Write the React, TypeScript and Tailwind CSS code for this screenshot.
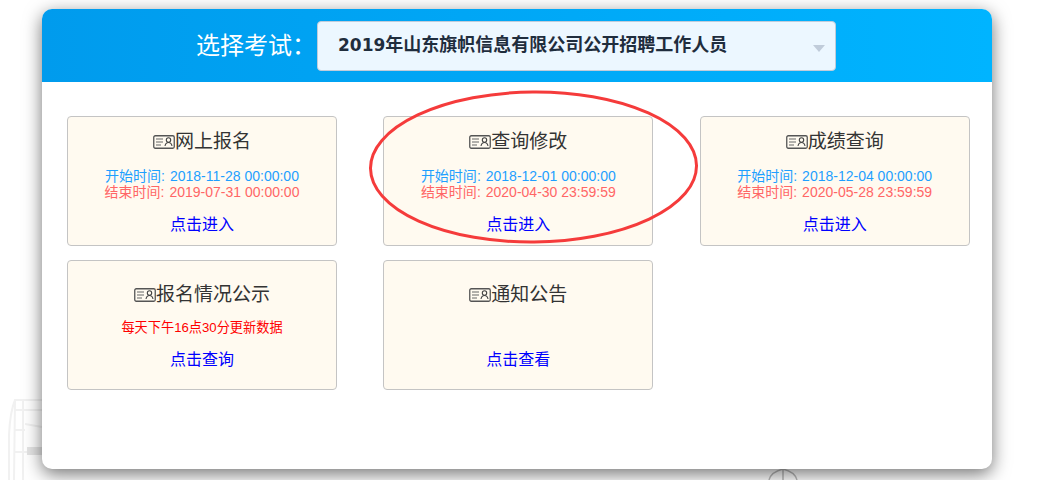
const font = "font-['Liberation_Sans','Noto_Sans_CJK_SC',sans-serif]";

type Entry = {
  title: string;
  start?: string;
  end?: string;
  notice?: string;
  link: string;
};

const entries: Entry[] = [
  { title: "网上报名", start: "2018-11-28 00:00:00", end: "2019-07-31 00:00:00", link: "点击进入" },
  { title: "查询修改", start: "2018-12-01 00:00:00", end: "2020-04-30 23:59:59", link: "点击进入" },
  { title: "成绩查询", start: "2018-12-04 00:00:00", end: "2020-05-28 23:59:59", link: "点击进入" },
  { title: "报名情况公示", notice: "每天下午16点30分更新数据", link: "点击查询" },
  { title: "通知公告", link: "点击查看" },
];

function CardIcon() {
  return (
    <svg width="22" height="14" viewBox="0 0 22 14" fill="none" className="shrink-0">
      <rect x="0.75" y="0.75" width="20.5" height="12.5" rx="1.5" stroke="#555" strokeWidth="1.3" />
      <path d="M3 4h7M3 7h7M3 10h5" stroke="#666" strokeWidth="1.2" />
      <circle cx="15.5" cy="5" r="2.2" stroke="#444" strokeWidth="1.1" />
      <path d="M12 11c.4-2.2 1.7-3.500 3.500-3.500S18.600 8.800 19 11" stroke="#444" strokeWidth="1.1" />
    </svg>
  );
}

function TimeLine({ label, value, color }: { label: string; value: string; color: string }) {
  return (
    <p className={color}>
      {label}:<span className="ml-[5px]">{value}</span>
    </p>
  );
}

function EntryCard({ item }: { item: Entry }) {
  const hasTimes = Boolean(item.start);
  return (
    <div className="ml-[25px] flex h-[130px] w-[270px] flex-col items-center rounded-[4px] border border-[#c4c4c4] bg-[#fffaf0] text-center">
      <div
        className={`flex items-center justify-center text-[19px] leading-[24px] text-[#333] ${
          hasTimes ? "mt-[13px]" : "mt-[22px]"
        }`}
      >
        <CardIcon />
        <span>{item.title}</span>
      </div>
      {hasTimes ? (
        <div className="mt-[14px] h-[32px] text-[14px] leading-[16px]">
          <TimeLine label="开始时间" value={item.start ?? ""} color="text-[#1e9fff]" />
          <TimeLine label="结束时间" value={item.end ?? ""} color="text-[#ff6666]" />
        </div>
      ) : (
        <div className="mt-[13px] h-[16px] text-[13.2px] leading-[16px] text-[#ff0000]">{item.notice}</div>
      )}
      <a className={`text-[16px] leading-[22px] text-[#0000ff] ${hasTimes ? "mt-[14px]" : "mt-[13px]"}`}>{item.link}</a>
    </div>
  );
}

export default function App() {
  return (
    <div className={`relative h-[480px] w-[1059px] overflow-hidden bg-white ${font}`}>
      {/* faint building art behind the panel */}
      <svg className="absolute left-0 top-[390px]" width="1059" height="90" fill="none" stroke="#f1f1f1" strokeWidth="2">
        <path d="M9 90V45Q10 22 15 10H42M23 10V90M15 20H42M25 34L42 37M15 40H25M15 62H42M15 10L14 90" />
        <path d="M27 57H42V65H27Z" fill="#e4e4e4" stroke="none" />
        <path d="M769 90Q771 82 783 79Q795 82 797 90M783 79V90" stroke="#bbb" strokeWidth="1.5" />
      </svg>

      <div className="absolute left-[42px] top-[9px] h-[460px] w-[950px] overflow-hidden rounded-[10px] bg-white shadow-[0_5px_18px_rgba(0,0,0,0.55)]">
        <div className="flex h-[73px] items-center bg-gradient-to-r from-[#009bed] to-[#00b4ff] pl-[154px]">
          <span className="w-[121px] text-[24px] leading-none text-white">选择考试：</span>
          <div className="relative flex h-[50px] w-[519px] items-center rounded-[4px] border border-[#c0ccda] bg-[#ecf7ff] pl-[20px] text-[18px] font-bold text-[#1f2d3d]">
            <span className="font-['DejaVu_Sans',sans-serif] text-[17px]">2019</span>
            年山东旗帜信息有限公司公开招聘工作人员
            <span className="absolute right-[10px] top-[23px] h-0 w-0 border-x-[6px] border-t-[7px] border-x-transparent border-t-[#c0ccda]" />
          </div>
        </div>
        <div className="grid grid-cols-[316.33px_316.33px_317.34px] gap-y-[14px] pt-[34px]">
          {entries.map((item) => (
            <EntryCard key={item.title} item={item} />
          ))}
        </div>
      </div>

      {/* hand drawn circle around 查询修改 */}
      <svg className="absolute left-[365px] top-[86px]" width="340" height="165" fill="none">
        <ellipse cx="168.500" cy="81" rx="163" ry="75" stroke="#f53b3b" strokeWidth="3" transform="rotate(-0.5 168.500 81)" />
      </svg>
    </div>
  );
}
